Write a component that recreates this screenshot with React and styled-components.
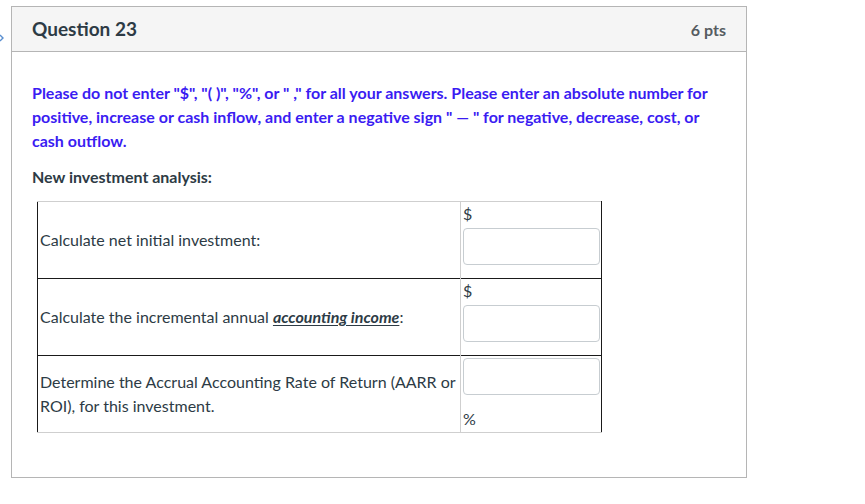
import styled, { createGlobalStyle } from "styled-components";

const GlobalStyle = createGlobalStyle`
  body {
    margin: 0;
    background: #fff;
    font-family: Lato, "Open Sans", sans-serif;
    color: #2d3b45;
  }
`;

const Page = styled.div`
  display: flex;
  align-items: flex-start;
  padding-top: 6px;
`;

const Gutter = styled.div`
  width: 11px;
  padding-top: 20px;
`;

const Panel = styled.section`
  width: 736px;
  height: 472px;
  border: 1px solid #b5b5b5;
  box-sizing: border-box;
`;

const Header = styled.header`
  display: flex;
  justify-content: space-between;
  align-items: center;
  height: 44px;
  padding: 0 20px;
  background: #f5f5f5;
  border-bottom: 1px solid #b5b5b5;
`;

const Title = styled.h2`
  margin: 0 0 1px;
  font-size: 19px;
  font-weight: 700;
  color: #2d3b45;
`;

const Points = styled.span`
  font-size: 16px;
  font-weight: 700;
  color: #555c61;
`;

const Body = styled.div`
  padding: 29px 20px 0 20px;
`;

const Notice = styled.p`
  margin: 0;
  font-size: 16px;
  font-weight: 700;
  line-height: 24px;
  color: #3a1cf2;
`;

const SubHead = styled.p`
  margin: 12px 0 12px;
  font-size: 16px;
  font-weight: 700;
  line-height: 24px;
  color: #2d3b45;
`;

const Emph = styled.strong`
  font-style: italic;
  text-decoration: underline;
  text-underline-offset: 2px;
`;

const Table = styled.table`
  margin-left: 5px;
  width: 565px;
  table-layout: fixed;
  border-collapse: collapse;
  font-size: 16px;
  line-height: 24px;
  color: #2d3b45;
`;

const Row = styled.tr`
  height: 77px;
  border-left: 1px solid #1a1a1a;
  border-right: 1px solid #1a1a1a;
  border-top: 1px solid ${(p) => (p.$first ? "#cfcfcf" : "#1a1a1a")};
  border-bottom: 1px solid ${(p) => (p.$last ? "#cfcfcf" : "#1a1a1a")};
`;

const LabelCell = styled.td`
  width: 418px;
  padding: 0 2px;
  vertical-align: middle;
  white-space: nowrap;
  border-right: 1px solid #cfcfcf;
`;

const AnswerCell = styled.td`
  padding: 1px 2px 0 2px;
  vertical-align: top;
`;

const Unit = styled.div`
  line-height: 22px;
  margin-top: ${(p) => (p.$after ? "13px" : "0")};
`;

const Answer = styled.input`
  display: block;
  width: 137px;
  height: 37px;
  box-sizing: border-box;
  margin-top: ${(p) => (p.$top ? "1px" : "3px")};
  border: 1px solid #c7cdd1;
  border-radius: 4px;
  background: #fff;
`;

const rows = [
  { label: <>Calculate net initial investment:</>, prefix: "$" },
  {
    label: (
      <>
        Calculate the incremental annual <Emph>accounting income</Emph>:
      </>
    ),
    prefix: "$",
  },
  {
    label: (
      <>
        Determine the Accrual Accounting Rate of Return (AARR or
        <br />
        ROI), for this investment.
      </>
    ),
    suffix: "%",
  },
];

export default function App() {
  return (
    <>
      <GlobalStyle />
      <Page>
        <Gutter>
          <svg width="4" height="8" viewBox="0 0 4 8">
            <path d="M0 1 L3 4 L0 7" fill="none" stroke="#5a8fd0" strokeWidth="1.4" />
          </svg>
        </Gutter>
        <Panel>
          <Header>
            <Title>Question 23</Title>
            <Points>6 pts</Points>
          </Header>
          <Body>
            <Notice>
              Please do not enter "$", "( )", "%", or " ," for all your answers. Please enter an
              absolute number for positive, increase or cash inflow, and enter a negative sign " — "
              for negative, decrease, cost, or cash outflow.
            </Notice>
            <SubHead>New investment analysis:</SubHead>
            <Table>
              <tbody>
                {rows.map((row, i) => (
                  <Row key={i} $first={i === 0} $last={i === rows.length - 1}>
                    <LabelCell>{row.label}</LabelCell>
                    <AnswerCell>
                      {row.prefix && <Unit>{row.prefix}</Unit>}
                      <Answer type="text" $top={!row.prefix} />
                      {row.suffix && <Unit $after>{row.suffix}</Unit>}
                    </AnswerCell>
                  </Row>
                ))}
              </tbody>
            </Table>
          </Body>
        </Panel>
      </Page>
    </>
  );
}
